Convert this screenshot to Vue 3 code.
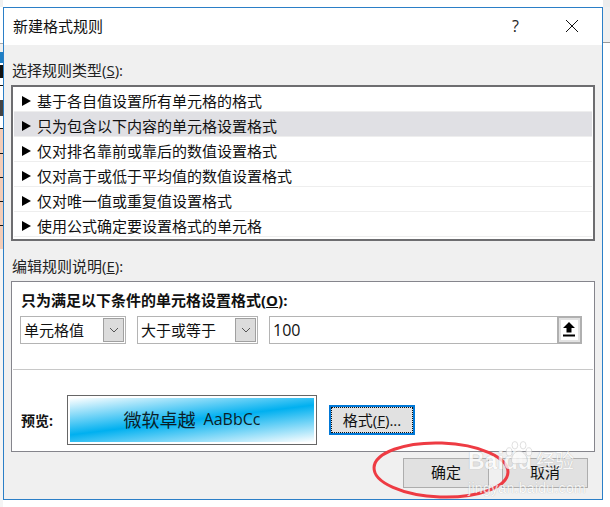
<script setup>
const ruleTypes = [
  '基于各自值设置所有单元格的格式',
  '只为包含以下内容的单元格设置格式',
  '仅对排名靠前或靠后的数值设置格式',
  '仅对高于或低于平均值的数值设置格式',
  '仅对唯一值或重复值设置格式',
  '使用公式确定要设置格式的单元格'
]
const selectedRule = 1
</script>

<template>
  <div class="page">
    <div class="strip-left"></div>

    <div class="dialog">
      <!-- 标题栏 -->
      <div class="title-bar">
        <span class="title">新建格式规则</span>
        <span class="help">?</span>
        <svg class="close" width="14" height="14" viewBox="0 0 14 14">
          <path d="M1 1L13 13M13 1L1 13" stroke="#111" stroke-width="1" fill="none" />
        </svg>
      </div>

      <div class="body">
        <div class="label">选择规则类型(<u>S</u>):</div>
        <ul class="rule-list">
          <li
            v-for="(rule, i) in ruleTypes"
            :key="rule"
            class="rule"
            :class="{ selected: i === selectedRule }"
          >
            <svg width="9" height="10" viewBox="0 0 9 10"><path d="M0 0L9 5L0 10Z" fill="#000" /></svg>
            <span>{{ rule }}</span>
          </li>
        </ul>

        <div class="label second">编辑规则说明(<u>E</u>):</div>
        <div class="group">
          <div class="group-title">只为满足以下条件的单元格设置格式(<u>O</u>):</div>
          <div class="condition">
            <div class="select select-a">
              <span class="select-text">单元格值</span>
              <span class="drop">
                <svg width="10" height="6" viewBox="0 0 10 6">
                  <path d="M1 1L5 5L9 1" stroke="#555" stroke-width="1" fill="none" />
                </svg>
              </span>
            </div>
            <div class="select select-b">
              <span class="select-text">大于或等于</span>
              <span class="drop">
                <svg width="10" height="6" viewBox="0 0 10 6">
                  <path d="M1 1L5 5L9 1" stroke="#555" stroke-width="1" fill="none" />
                </svg>
              </span>
            </div>
            <div class="value-input">
              <span class="value">100</span>
              <span class="ref-btn">
                <svg width="14" height="15" viewBox="0 0 14 15">
                  <path d="M7 0L13 6H9.5V10.5H4.5V6H1Z M1 12.5H13V14.5H1Z" fill="#000" />
                </svg>
              </span>
            </div>
          </div>
          <div class="divider"></div>
          <div class="preview-row">
            <span class="preview-label">预览:</span>
            <div class="preview-box">
              <div class="preview-fill">
                <span class="preview-cn">微软卓越</span>
                <span class="preview-en">AaBbCc</span>
              </div>
            </div>
            <button class="format-btn"><span class="focus-ring">格式(<u>F</u>)...</span></button>
          </div>
        </div>

        <div class="footer">
          <button class="btn">确定</button>
          <button class="btn">取消</button>
        </div>
      </div>

      <!-- 截图上的红圈 -->
      <svg class="red-circle" width="150" height="70" viewBox="0 0 150 70">
        <ellipse
          cx="75"
          cy="35"
          rx="67"
          ry="27"
          transform="rotate(2 75 35)"
          fill="none"
          stroke="#ee3b43"
          stroke-width="3"
        />
      </svg>

      <!-- 水印 -->
      <div class="watermark">
        <svg class="paw" width="28" height="25" viewBox="0 0 34 30">
          <g fill="#fff" stroke="#c8c8c8" stroke-width="1">
            <ellipse cx="5" cy="13" rx="3.5" ry="5" />
            <ellipse cx="12" cy="5" rx="3.5" ry="4.5" />
            <ellipse cx="22" cy="5" rx="3.5" ry="4.5" />
            <ellipse cx="29" cy="13" rx="3.5" ry="5" />
            <path d="M17 12C11 12 7 20 8 25C10 29 14 27 17 27C20 27 25 29 27 25C28 20 23 12 17 12Z" />
          </g>
        </svg>
        <span class="wm-baidu">Baidu</span>
        <span class="wm-cn">经验</span>
        <span class="wm-url">jingyan.baidu.com</span>
      </div>
    </div>

    <div class="strip-right"></div>
  </div>
</template>

<style>
html,
body {
  margin: 0;
  padding: 0;
  background: #fff;
}
</style>

<style scoped>
.page {
  width: 610px;
  height: 507px;
  display: flex;
  overflow: hidden;
  font-family: "Open Sans", "Noto Sans CJK SC", sans-serif;
  color: #111;
  font-size: 15px;
  background: #fff;
}

/* 对话框后面露出来的表格 */
.strip-left {
  width: 3px;
  flex: none;
  background: linear-gradient(
    to bottom,
    #f0f0f0 0 7px,
    #fff 7px 43px,
    #aaa 43px 44px,
    #f0f0f0 44px 52px,
    #1f7fc4 52px 63px,
    #fff 63px 65px,
    #111 65px 78px,
    #fff 78px 85px,
    #111 85px 86px,
    #fff 86px 100px,
    #444 100px 116px,
    #fff 116px 128px,
    #111 128px 129px,
    #f3cdb8 129px 153px,
    #111 153px 154px,
    #f3cdb8 154px 177px,
    #111 177px 178px,
    #f3cdb8 178px 201px,
    #111 201px 202px,
    #f3cdb8 202px 225px,
    #111 225px 226px,
    #f3cdb8 226px 249px,
    #f4f4f4 249px
  );
}
.strip-right {
  width: 7px;
  flex: none;
  background: linear-gradient(
    to bottom,
    #ececec 0 7px,
    #f0f0f0 7px 42px,
    #9a9a9a 42px 43px,
    #fff 43px
  );
}

.dialog {
  position: relative;
  width: 600px;
  height: 493px;
  margin-top: 7px;
  flex: none;
  box-sizing: border-box;
  border: 1px solid #2b7fc7;
  background: #f0f0f0;
  display: flex;
  flex-direction: column;
}

.title-bar {
  height: 37px;
  flex: none;
  background: #fff;
  display: flex;
  align-items: center;
  padding: 0 0 1px 9px;
  box-sizing: border-box;
}
.title {
  flex: 1;
  line-height: 20px;
}
.help {
  font-size: 16px;
  margin-right: 46px;
  color: #222;
}
.close {
  margin-right: 23px;
}

.body {
  flex: 1;
  padding: 15px 7px 0;
  display: flex;
  flex-direction: column;
}
.label {
  line-height: 20px;
  height: 20px;
  margin-bottom: 5px;
  padding-left: 1px;
  color: #222;
}
.label.second {
  margin-top: 15px;
}

.rule-list {
  list-style: none;
  margin: 0;
  padding: 0 1px 4px;
  width: 584px;
  height: 156px;
  box-sizing: border-box;
  border: 2px solid #6d6d70;
  background: #fff;
}
.rule {
  height: 25px;
  box-sizing: border-box;
  border-bottom: 1px solid #eeeeee;
  display: flex;
  align-items: center;
  gap: 6px;
  padding: 4px 0 0 8px;
  line-height: 20px;
}
.rule.selected {
  background: #e0e0e4;
}

.group {
  width: 584px;
  height: 171px;
  box-sizing: border-box;
  border: 1px solid #85858c;
  background: #fff;
}
.group-title {
  margin: 8px 0 0 9px;
  line-height: 20px;
  font-weight: 700;
}
.condition {
  display: flex;
  gap: 11px;
  margin: 6px 0 0 8px;
}
.select {
  height: 28px;
  box-sizing: border-box;
  border: 1px solid #b4b4b4;
  display: flex;
  align-items: center;
  justify-content: space-between;
  padding: 0 1px 0 3px;
}
.select-text {
  margin-bottom: 2px;
}
.select-a {
  width: 106px;
}
.select-b {
  width: 121px;
}
.drop {
  width: 21px;
  height: 24px;
  box-sizing: border-box;
  border: 1px solid #a0a0a0;
  background: #dcdcdc;
  display: flex;
  align-items: center;
  justify-content: center;
}
.value-input {
  width: 313px;
  height: 28px;
  box-sizing: border-box;
  border: 1px solid #b4b4b4;
  border-right: none;
  display: flex;
  align-items: center;
  justify-content: space-between;
  padding-left: 3px;
}
.value {
  font-size: 16px;
}
.ref-btn {
  width: 25px;
  height: 28px;
  box-sizing: border-box;
  border: 2px solid #b0b0b0;
  outline: 2px solid #e2e2e2;
  outline-offset: -4px;
  background: #fff;
  padding: 0 2px 2px 0;
  display: flex;
  align-items: center;
  justify-content: center;
}

.divider {
  height: 1px;
  margin: 25px 1px 0;
  background: #c8c8c8;
}

.preview-row {
  display: flex;
  align-items: center;
  margin: 25px 0 0 9px;
}
.preview-label {
  width: 46px;
  font-weight: 700;
  font-size: 14px;
}
.preview-box {
  width: 250px;
  height: 50px;
  box-sizing: border-box;
  border: 1px solid #666;
  padding: 2px;
  background: #fff;
}
.preview-fill {
  height: 100%;
  box-sizing: border-box;
  padding-bottom: 2px;
  background: linear-gradient(173deg, #fff 0%, #00b0f0 50%, #fff 100%);
  display: flex;
  align-items: center;
  justify-content: center;
  gap: 8px;
  color: #0c1e28;
}
.preview-cn {
  font-size: 18px;
}
.preview-en {
  font-size: 16px;
}
.format-btn {
  width: 86px;
  height: 30px;
  margin-left: 12px;
  padding: 0;
  box-sizing: border-box;
  border: 2px solid #0078d7;
  background: #e1e1e1;
  font: inherit;
  color: #111;
}
.focus-ring {
  display: block;
  height: 26px;
  line-height: 24px;
  box-sizing: border-box;
  border: 1px dotted #111;
}

.footer {
  display: flex;
  justify-content: flex-end;
  gap: 13px;
  margin: 6px 7px 0 0;
}
.btn {
  width: 86px;
  height: 30px;
  padding: 0 0 3px;
  box-sizing: border-box;
  border: 1px solid #adadad;
  background: #e1e1e1;
  font: inherit;
  color: #111;
}

.red-circle {
  position: absolute;
  left: 362px;
  top: 427px;
}

/* 百度经验水印，盖在按钮上面 */
.watermark {
  position: absolute;
  left: 464px;
  top: 433px;
  width: 112px;
  height: 56px;
  display: grid;
  grid-template-columns: 68px auto;
  grid-template-rows: 33px 23px;
  align-items: end;
  color: #fff;
  opacity: 0.75;
  text-shadow: 0 0 1px #9a9a9a;
  white-space: nowrap;
}
.paw {
  position: absolute;
  left: 37px;
  top: 0;
  opacity: 0.9;
}
.wm-baidu {
  font-family: "Liberation Sans", sans-serif;
  font-size: 23px;
  font-weight: 700;
  line-height: 26px;
}
.wm-cn {
  font-size: 19px;
  line-height: 26px;
}
.wm-url {
  grid-column: 1 / 3;
  font-family: "Liberation Sans", sans-serif;
  font-size: 14px;
  line-height: 18px;
  letter-spacing: 0.3px;
}
</style>
